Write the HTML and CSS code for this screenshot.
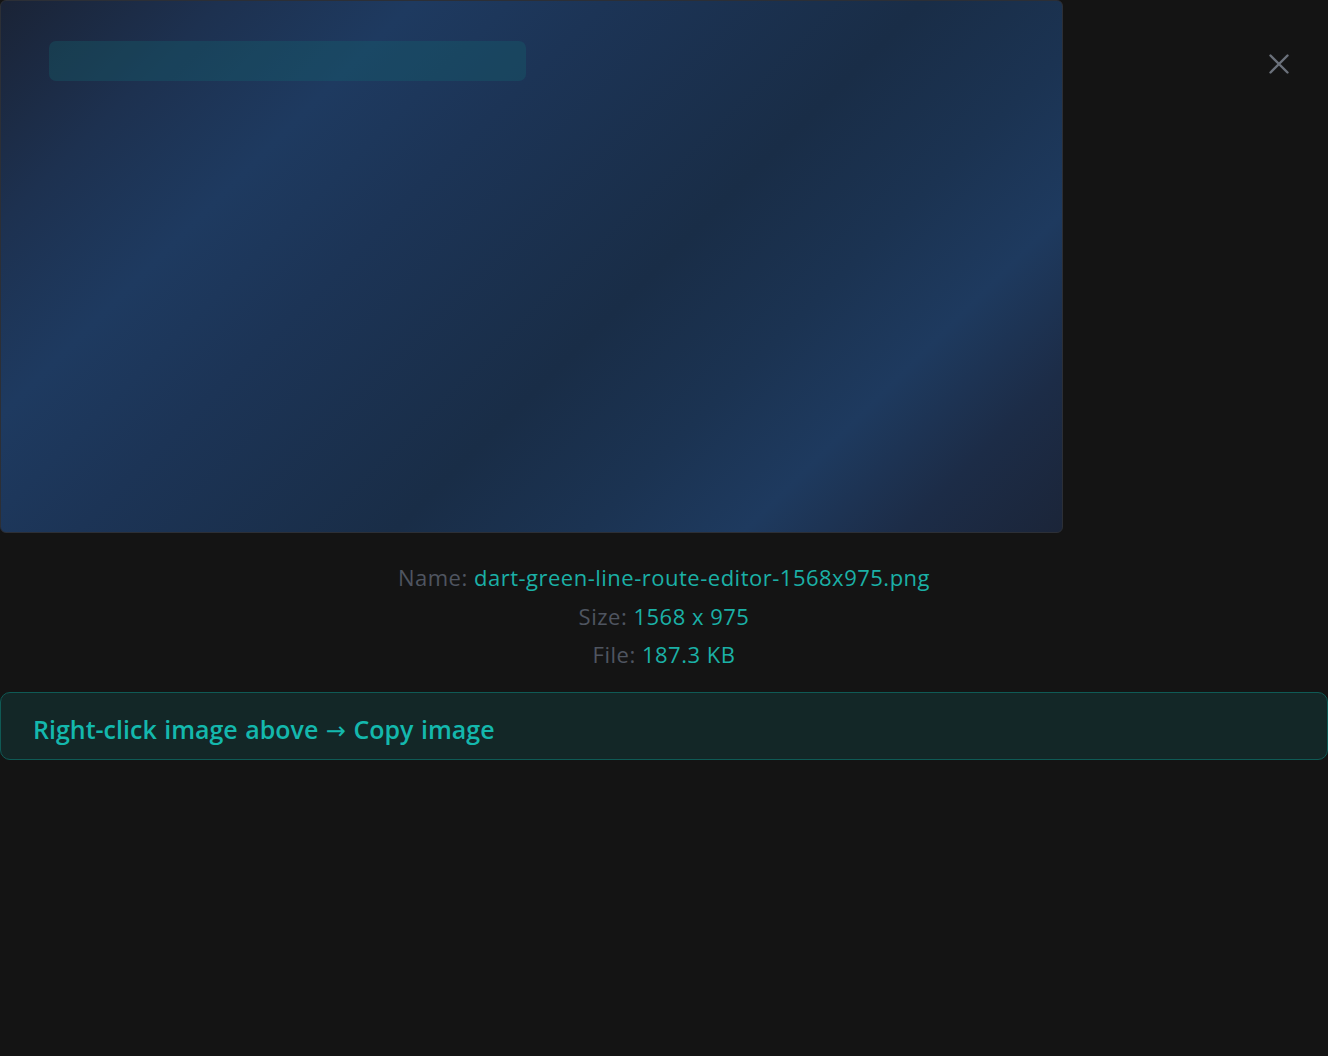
FILE: index.html
```html
<!DOCTYPE html>
<html lang="en">
<head>
<meta charset="utf-8">
<title>Image preview</title>
<link rel="stylesheet" href="styles.css">
</head>
<body>
<div class="viewer">
  <div class="top">
    <div class="preview">
      <div class="preview-bar"></div>
    </div>
    <button class="close" aria-label="Close">
      <svg width="24" height="24" viewBox="0 0 24 24" fill="none" stroke="currentColor" stroke-width="2.4" stroke-linecap="round"><path d="M3.5 3.5L20.5 20.5M20.5 3.5L3.5 20.5"/></svg>
    </button>
  </div>
  <div class="info">
    <div class="info-line"><span class="label">Name:</span> <span class="value">dart-green-line-route-editor-1568x975.png</span></div>
    <div class="info-line"><span class="label">Size:</span> <span class="value">1568 x 975</span></div>
    <div class="info-line"><span class="label">File:</span> <span class="value">187.3 KB</span></div>
  </div>
  <div class="hint"><span class="hint-text">Right-click image above <span class="arrow">→</span> Copy image</span></div>
</div>
</body>
</html>
```

FILE: styles.css
```css
html, body {
  margin: 0;
  padding: 0;
  background: #141414;
  height: 100%;
}

body {
  font-family: "Open Sans", "Noto Sans", sans-serif;
}

.viewer {
  display: flex;
  flex-direction: column;
}

.top {
  position: relative;
  display: flex;
}

.preview {
  box-sizing: border-box;
  width: 1063px;
  height: 533px;
  border: 1px solid #2c2f36;
  border-radius: 6px;
  background: linear-gradient(135deg,
    #1a2336 0%,
    #1d3150 14%,
    #1e3a60 26%,
    #1c3456 38%,
    #192d47 58%,
    #1b3352 70%,
    #1e3a5f 80%,
    #1c2c47 90%,
    #1b2539 100%);
  padding: 40px 48px;
}

.preview-bar {
  width: 477px;
  height: 40px;
  border-radius: 7px;
  background: rgba(20, 104, 112, 0.32);
}

.close {
  position: absolute;
  top: 52px;
  right: 37px;
  width: 24px;
  height: 24px;
  padding: 0;
  border: 0;
  background: transparent;
  color: #6b717b;
  display: flex;
}

.info {
  margin-top: 25px;
  display: flex;
  flex-direction: column;
  align-items: center;
  font-size: 22px;
  letter-spacing: 0.5px;
  line-height: 38.5px;
}

.label {
  color: #4f5560;
}

.value {
  color: #1bb0a6;
}

.hint {
  margin-top: 18px;
  box-sizing: border-box;
  height: 68px;
  border: 1px solid #0f5a55;
  border-radius: 10px;
  background: #132727;
  color: #14b8ad;
  font-size: 25px;
  font-weight: 600;
  word-spacing: 1px;
  display: flex;
  align-items: center;
  padding: 6px 32px 0 32px;
}

.arrow {
  font-family: "DejaVu Sans", sans-serif;
  font-weight: 400;
  font-size: 24px;
}
```
